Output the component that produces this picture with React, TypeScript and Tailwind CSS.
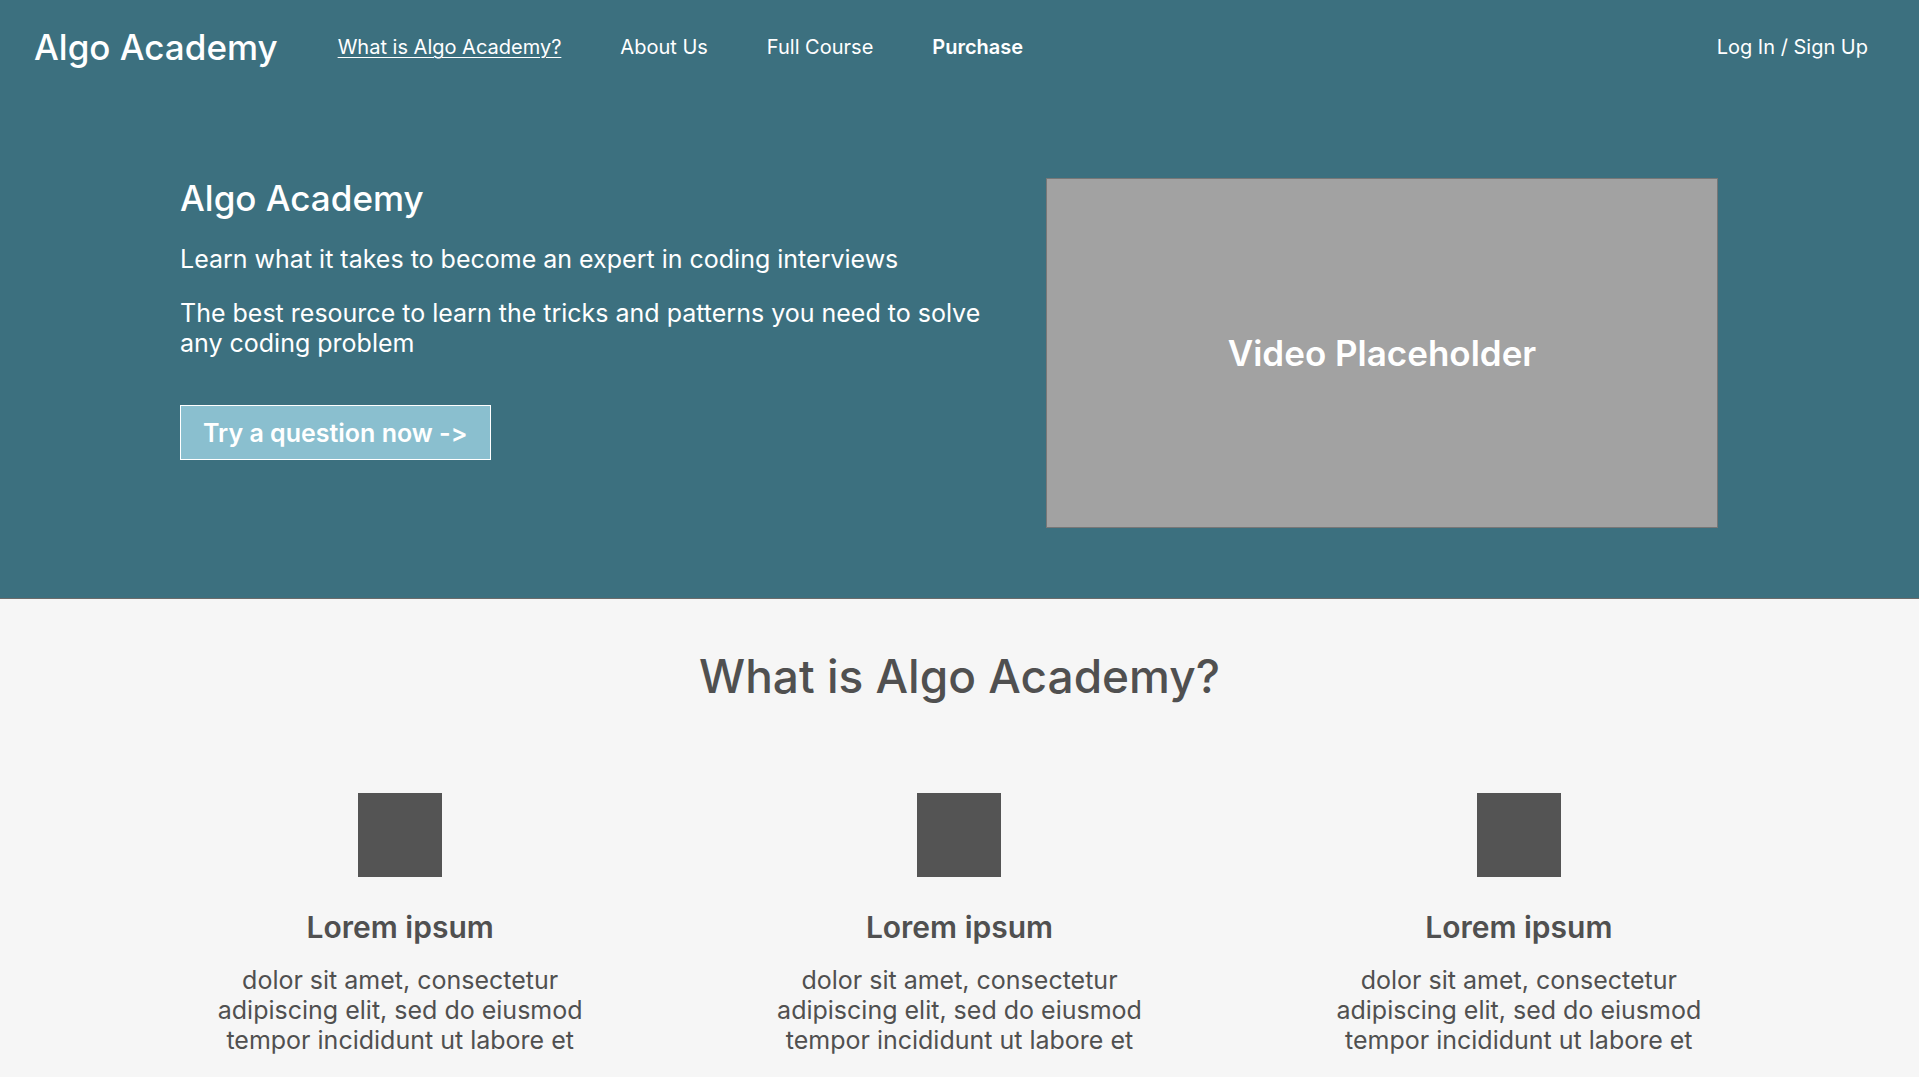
import React from "react";

const navLinks = [
  { label: "What is Algo Academy?", active: true },
  { label: "About Us" },
  { label: "Full Course" },
  { label: "Purchase", bold: true },
];

const features = [1, 2, 3];

export default function App() {
  return (
    <div className="min-h-screen bg-[#f6f6f6] font-['Inter',sans-serif] antialiased [font-variant-ligatures:no-contextual]">
      {/* Header */}
      <header className="h-[94px] bg-[#3c707f] flex items-center pl-[34px] pr-[51px]">
        <a className="text-white text-[35px] font-medium leading-none">Algo Academy</a>
        <nav className="flex items-center gap-[59px] ml-[60px]">
          {navLinks.map((l) => (
            <a
              key={l.label}
              className={
                "text-white text-[20px] leading-none " +
                (l.active ? "underline underline-offset-[3px] decoration-1 " : "") +
                (l.bold ? "font-semibold" : "")
              }
            >
              {l.label}
            </a>
          ))}
        </nav>
        <a className="ml-auto text-white text-[20px] leading-none">Log In / Sign Up</a>
      </header>

      {/* Hero */}
      <section className="bg-[#3c707f] border-b border-[#6b6b6b] pt-[84px] pb-[70px] pl-[180px] pr-[201px]">
        <div className="flex items-start justify-between">
          <div className="w-[830px] -mt-[2px] text-white">
            <h1 className="text-[35px] leading-[44px] font-medium">Algo Academy</h1>
            <p className="mt-6 text-[25px] leading-[30px]">
              Learn what it takes to become an expert in coding interviews
            </p>
            <p className="mt-6 text-[25px] leading-[30px] w-[830px]">
              The best resource to learn the tricks and patterns you need to solve any coding problem
            </p>
            <button className="mt-[47px] h-[55px] px-[22px] flex items-center bg-[#8abfcf] border border-white text-white text-[25px] leading-[30px] font-semibold">
              Try a question now -&gt;
            </button>
          </div>
          <div className="w-[672px] h-[350px] bg-[#a2a2a2] border border-[#777777] flex items-center justify-center">
            <span className="text-white text-[35px] font-semibold leading-none">Video Placeholder</span>
          </div>
        </div>
      </section>

      {/* What is */}
      <section className="pt-[50px] pb-[40px] text-[#505050]">
        <h2 className="text-center text-[46px] leading-[54px] font-medium">What is Algo Academy?</h2>
        <div className="mt-[90px] mx-auto w-[1678px] grid grid-cols-3">
          {features.map((f) => (
            <div key={f} className="flex flex-col items-center text-center">
              <div className="w-[84px] h-[84px] bg-[#545454]" />
              <h3 className="mt-[33px] text-[30px] leading-[34px] font-semibold">Lorem ipsum</h3>
              <p className="mt-[21px] w-[400px] text-[25px] leading-[30px]">
                dolor sit amet, consectetur adipiscing elit, sed do eiusmod tempor incididunt ut labore et
              </p>
            </div>
          ))}
        </div>
      </section>
    </div>
  );
}
